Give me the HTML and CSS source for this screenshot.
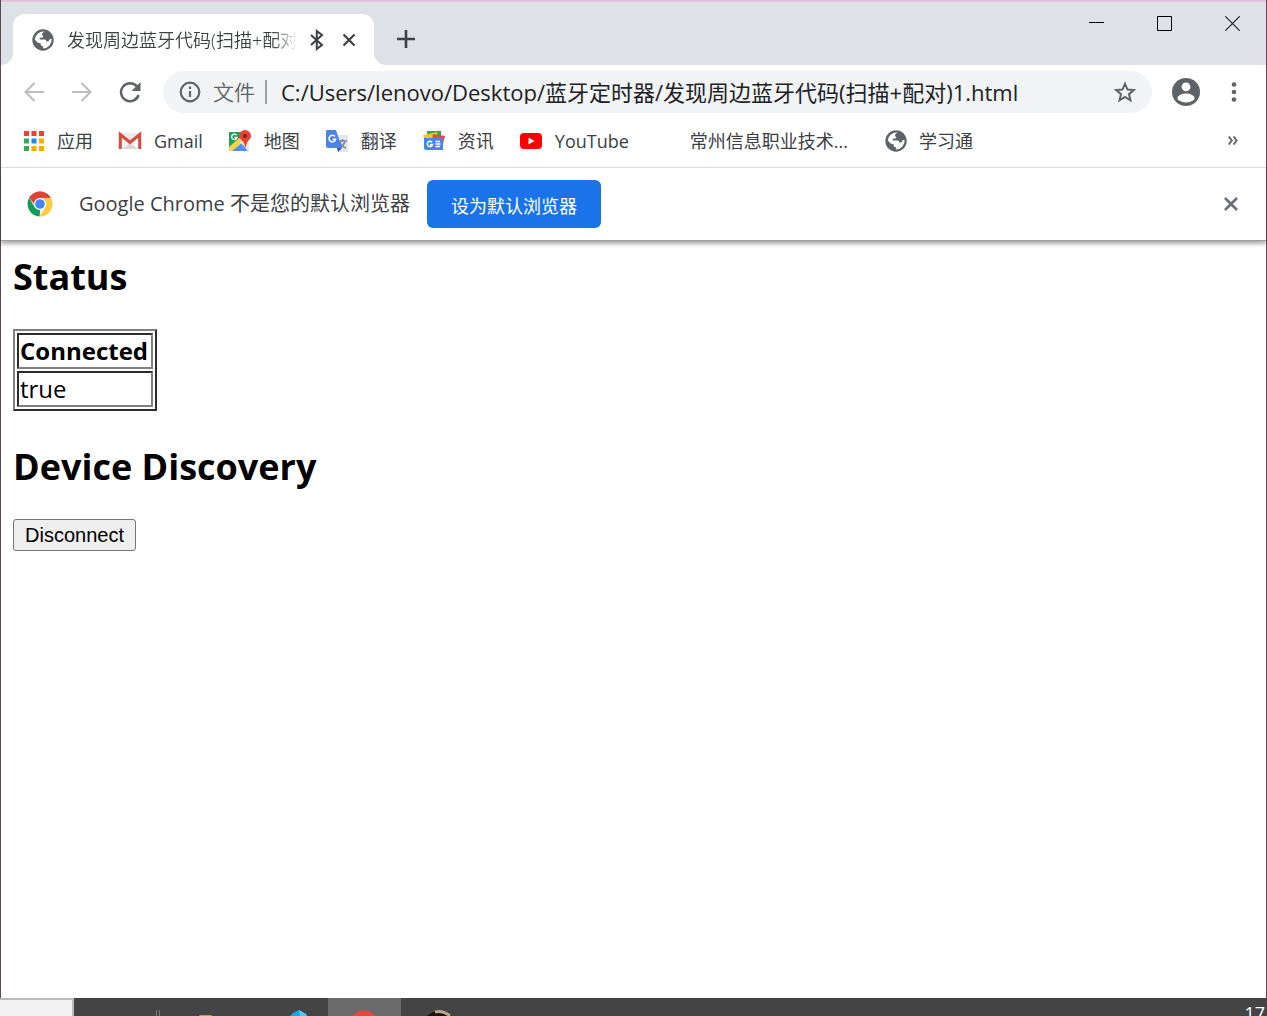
FILE: index.html
```html
<!DOCTYPE html>
<html lang="zh-CN">
<head>
<meta charset="utf-8">
<meta name="viewport" content="width=device-width, initial-scale=1">
<title>发现周边蓝牙代码(扫描+配对)</title>
<link rel="stylesheet" href="styles.css">
</head>
<body>
<svg class="defs" width="0" height="0" aria-hidden="true">
  <symbol id="globe" viewBox="0 0 22 22">
    <circle cx="11" cy="11" r="10.7" fill="#5f6368"/>
    <path fill="#fff" d="M12.6 2.6c-1 .6-2.600 1.600-2.600 2.800 0 1.200 1.200.8 1.200 2 0 1.300-1.600 1-3 1.300-1 .3-.7 1.500-.2 1.900h4.600c1 .1 1.700.9 1.700 1.900 1.500.2 2.600-.2 3-1.500.3-1 1-1 2.300-.9a8.700 8.700 0 0 1-8.300 9.400c-.3-1 .1-1.700-.6-2.300-.8-.6-2-.4-2-1.500v-1.500c-1.500.1-2.500-.2-3.300-1l-2.700-2.700A8.700 8.700 0 0 1 12.600 2.600z"/>
  </symbol>
</svg>

<div class="window">
  <header class="tabstrip">
    <div class="tab">
      <svg width="22" height="22"><use href="#globe"/></svg>
      <span class="tab-title">发现周边蓝牙代码(扫描+配对)</span>
      <svg width="16" height="22" viewBox="0 0 16 22" fill="none" stroke="#3c4043" stroke-width="2"><path d="M2 6l11 10-5.200 4V2L13 6 2 16"/></svg>
      <button class="icon-button tab-close" aria-label="关闭标签页"><svg width="14" height="14" viewBox="0 0 14 14" stroke="#3c4043" stroke-width="2.200"><path d="M1.500 1.500l11 11M12.500 1.500l-11 11"/></svg></button>
    </div>
    <button class="icon-button new-tab" aria-label="新标签页"><svg width="18" height="18" viewBox="0 0 18 18" stroke="#3c4043" stroke-width="2.600"><path d="M9 0v18M0 9h18"/></svg></button>
    <div class="window-controls">
      <button class="icon-button" aria-label="最小化"><svg width="15" height="15" viewBox="0 0 15 15" stroke="#000"><path d="M0 6.500h15"/></svg></button>
      <button class="icon-button" aria-label="最大化"><svg width="15" height="15" viewBox="0 0 15 15" stroke="#000" fill="none"><path d="M.5.5h14v14H.5z"/></svg></button>
      <button class="icon-button" aria-label="关闭"><svg width="15" height="15" viewBox="0 0 15 15" stroke="#222" stroke-width="1.200"><path d="M.3.3l14.400 14.400M14.700.3L.3 14.700"/></svg></button>
    </div>
  </header>

  <nav class="toolbar">
    <button class="icon-button nav-button" aria-label="后退"><svg width="20" height="20" viewBox="0 0 20 20" stroke="#babcbe" stroke-width="2" fill="none"><path d="M20 10H2M10.500 1L1.500 10l9 9"/></svg></button>
    <button class="icon-button nav-button" aria-label="前进"><svg width="20" height="20" viewBox="0 0 20 20" stroke="#babcbe" stroke-width="2" fill="none"><path d="M0 10h18M9.500 1l9 9-9 9"/></svg></button>
    <button class="icon-button nav-button" aria-label="重新加载"><svg width="22" height="22" viewBox="0 0 22 22"><path d="M18 5.500A9 9 0 1 0 19.600 14" fill="none" stroke="#5f6368" stroke-width="2.500"/><path d="M21.500 1v9h-9z" fill="#5f6368"/></svg></button>
    <div class="omnibox">
      <svg width="22" height="22" viewBox="0 0 22 22" fill="none" stroke="#5f6368" stroke-width="2.200"><circle cx="11" cy="11" r="9.300"/><path d="M11 10v6M11 5.500V8"/></svg>
      <label class="scheme" for="address">文件</label>
      <input class="address" id="address" type="text" value="C:/Users/lenovo/Desktop/蓝牙定时器/发现周边蓝牙代码(扫描+配对)1.html">
      <button class="icon-button" aria-label="收藏"><svg width="24" height="24" viewBox="0 0 24 24" fill="none" stroke="#5f6368" stroke-width="2"><path d="M12 3.800l2.500 5.800 6.300.500-4.800 4.100 1.500 6.100-5.500-3.300-5.500 3.300L8 14.200l-4.800-4.100 6.300-.5z"/></svg></button>
    </div>
    <button class="icon-button profile" aria-label="用户"><svg width="28" height="28" viewBox="0 0 28 28"><circle cx="14" cy="14" r="14" fill="#5f6368"/><circle cx="14" cy="8.800" r="4.400" fill="#fff"/><ellipse cx="14" cy="20" rx="8.600" ry="4.400" fill="#fff"/></svg></button>
    <button class="icon-button" aria-label="菜单"><svg width="6" height="20" viewBox="0 0 6 20" fill="#5f6368"><circle cx="3" cy="2.500" r="2.300"/><circle cx="3" cy="10" r="2.300"/><circle cx="3" cy="17.500" r="2.300"/></svg></button>
  </nav>

  <nav class="bookmarks">
    <a href="#"><svg width="22" height="22" viewBox="0 0 22 22"><path fill="#ea4335" d="M1 1h5v5H1zM8.500 1h5v5h-5zM16 1h5v5h-5z"/><path fill="#34a853" d="M1 8.500h5v5H1zM1 16h5v5H1z"/><path fill="#1e88e5" d="M8.500 8.500h5v5h-5z"/><path fill="#f9ab00" d="M16 8.500h5v5h-5zM8.500 16h5v5h-5zM16 16h5v5h-5z"/></svg>应用</a>
    <a href="#"><svg width="24" height="24" viewBox="0 0 24 24"><path fill="#eceaea" d="M1 4h22v16H1z"/><path fill="#fafafa" d="M4 7l8 7 8-7v13H4z"/><path fill="#d8d6d6" d="M4 20l8-6 8 6z"/><path d="M2.300 20V5.500l9.700 8 9.700-8V20" fill="none" stroke="#d54b40" stroke-width="3"/></svg>Gmail</a>
    <a href="#"><svg width="24" height="24" viewBox="0 0 24 24"><path fill="#20a15d" d="M1 3h17v19H1z"/><path fill="#4f8ff0" d="M4 22l8-9 8 9z"/><path fill="#ffd04b" d="M1 18L16 5l3 5L4 22H1z"/><path fill="#e5e6e8" d="M12 13l4-4 5 4v9h-1z"/><path fill="#20a15d" d="M1 3h14L1 17z"/><path d="M8.500 6.200a2.700 2.700 0 1 0 .5 2.300H6.500" fill="none" stroke="#fff" stroke-width="1.300"/><path fill="#e54335" d="M17 1a6 6 0 0 1 6 6c0 3.500-4.500 4.500-5 11h-1c-.5-6.500-6-7.500-6-11a6 6 0 0 1 6-6z"/><circle cx="17" cy="7" r="2.200" fill="#8e211b"/></svg>地图</a>
    <a href="#"><svg width="24" height="24" viewBox="0 0 24 24"><path fill="#e3e5e7" d="M9 6h14v17H13z"/><path d="M13 12h9M17.500 10v2M20 12c-1 4-3 6-6 7M15 13c1 3 3 5 6 6" fill="none" stroke="#79879a" stroke-width="1.600"/><path fill="#4b83e8" d="M2 1h9l6 18H3a2 2 0 0 1-2-2V2z"/><path fill="#3156a3" d="M12 19h5l-4 4z"/><path d="M10 7.500a3.300 3.300 0 1 0 .6 2.700H7.500" fill="none" stroke="#fff" stroke-width="1.600"/></svg>翻译</a>
    <a href="#"><svg width="24" height="24" viewBox="0 0 24 24"><path fill="#2fa74f" d="M5 2h14v9H5z"/><path fill="#fbc02d" d="M1 6l14-3 2 10H3z"/><path fill="#e5493a" d="M11 5l12 2-3 12H9z"/><path fill="#4b83ed" d="M2 9h19v12H4a2 2 0 0 1-2-2z"/><path d="M10 13.300a2.600 2.600 0 1 0 .5 2.200H8M13.500 12.500H18M13.500 15h5M13.500 17.500H18" fill="none" stroke="#fff" stroke-width="1.400"/></svg>资讯</a>
    <a href="#"><svg width="24" height="24" viewBox="0 0 24 24"><rect x="1" y="4" width="22" height="16" rx="4" fill="#f00"/><path fill="#fff" d="M9.500 8.500l6 3.500-6 3.500z"/></svg>YouTube</a>
    <a class="no-icon" href="#">常州信息职业技术...</a>
    <a class="wide-gap" href="#"><svg width="22" height="22"><use href="#globe"/></svg>学习通</a>
    <button class="icon-button more" aria-label="更多书签"><svg width="10" height="9" viewBox="0 0 10 9" fill="none" stroke="#5f6368" stroke-width="1.900"><path d="M.8.5l3 4-3 4M5.600.5l3 4-3 4"/></svg></button>
  </nav>

  <aside class="infobar">
    <svg width="26" height="26" viewBox="0 0 26 26"><circle cx="13" cy="13" r="12.500" fill="#fff"/><path fill="#db4437" d="M13 13L2.200 6.700A12.500 12.500 0 0 1 23.800 6.700H13z"/><path fill="#0f9d58" d="M2.200 6.700L7.600 16.200 13 19.300 12.700 25.500A12.500 12.500 0 0 1 2.200 6.700z"/><path fill="#ffcd40" d="M23.800 6.700A12.500 12.500 0 0 1 12.500 25.500L18.400 16.200 15 6.700z"/><path fill="#db4437" d="M13 6.700h10.800A12.500 12.500 0 0 0 2.200 6.700L7 13z"/><circle cx="13" cy="13" r="6.100" fill="#fff"/><circle cx="13" cy="13" r="4.800" fill="#4285f4"/></svg>
    <span class="message">Google Chrome 不是您的默认浏览器</span>
    <button class="primary">设为默认浏览器</button>
    <button class="icon-button dismiss" aria-label="关闭提示"><svg width="14" height="14" viewBox="0 0 14 14" stroke="#6b6e72" stroke-width="2.600"><path d="M1 1l12 12M13 1L1 13"/></svg></button>
  </aside>

  <main class="page">
    <h2>Status</h2>
    <table>
      <thead><tr><th scope="col">Connected</th></tr></thead>
      <tbody><tr><td>true</td></tr></tbody>
    </table>
    <h2>Device Discovery</h2>
    <button class="disconnect">Disconnect</button>
  </main>
</div>

<footer class="taskbar">
  <div class="start"></div>
  <svg class="apps" width="400" height="18" viewBox="0 0 400 18"><path d="M82.500 12v6M85.500 12v6" stroke="#777"/><path fill="#c9a227" d="M125 18q0-1 2-1h10q1 0 1 1z"/><path fill="#1ba1e8" d="M216 18l3-3 6-3 7 4 1 2z"/><path fill="#55c3f5" d="M225 12l7 4 1 2h-7z"/><path fill="#6b6b6b" d="M254 0h73v18h-73z"/><path fill="#e8453c" d="M278 18q12-11 24 0z"/><path fill="#17120e" d="M353 18q12-10 25 0z"/><path d="M361 14q8-2 15 4" fill="none" stroke="#b7a78c" stroke-width="3"/></svg>
  <time class="clock">17</time>
</footer>
</body>
</html>
```
FILE: styles.css
```css
* {
  box-sizing: border-box;
}

body {
  display: flex;
  flex-direction: column;
  min-height: 100vh;
  margin: 0;
  background: #fff;
  color: #3c4043;
  font-family: "Open Sans", "Noto Sans CJK SC", sans-serif;
  font-size: 18px;
  line-height: 24px;
}

svg {
  display: block;
  flex: none;
}

.defs {
  position: absolute;
}

.icon-button {
  display: flex;
  flex: none;
  align-items: center;
  justify-content: center;
  padding: 0;
  border: 0;
  background: none;
}

.window {
  display: flex;
  flex: 1;
  flex-direction: column;
  border: solid #5b4a55;
  border-width: 0 1px;
}

/* Tabs */
.tabstrip {
  display: flex;
  align-items: flex-end;
  height: 65px;
  padding-left: 12px;
  border-top: 2px solid #e2c0dc;
  background: #dee1e6;
}

.tab {
  position: relative;
  display: flex;
  align-items: center;
  width: 361px;
  height: 51px;
  padding: 0 18px 0 19px;
  border-radius: 12px 12px 0 0;
  background: #fff;
}

.tab::before,
.tab::after {
  position: absolute;
  bottom: 0;
  width: 12px;
  height: 12px;
  content: "";
}

.tab::before {
  right: 100%;
  background: radial-gradient(circle at 0 0, transparent 12px, #fff 12px);
}

.tab::after {
  left: 100%;
  background: radial-gradient(circle at 100% 0, transparent 12px, #fff 12px);
}

.tab-title {
  flex: 1;
  margin: 0 12px 0 13px;
  overflow: hidden;
  white-space: nowrap;
  font-weight: 350;
  mask-image: linear-gradient(to left, transparent, #000 24px);
}

.tab-close {
  margin-left: 17px;
}

.new-tab {
  align-self: center;
  margin: 10px 0 0 23px;
}

.window-controls {
  display: flex;
  align-self: flex-start;
  margin-left: auto;
}

.window-controls .icon-button {
  width: 68px;
  height: 42px;
}

/* Address row */
.toolbar {
  display: flex;
  align-items: center;
  gap: 20px;
  height: 54px;
  padding: 0 29px 0 22px;
}

.nav-button {
  width: 22px;
  margin-right: 6px;
}

.omnibox {
  display: flex;
  flex: 1;
  align-items: center;
  height: 42px;
  margin-left: -4px;
  padding: 0 15px 0 16px;
  border-radius: 21px;
  background: #f1f3f4;
  font-size: 22px;
}

.profile {
  margin-right: 11px;
}

.scheme {
  flex: none;
  margin-left: 12px;
  padding-right: 10px;
  border-right: 2px solid #9aa0a6;
  color: #5f6368;
  font-size: 21px;
  font-weight: 350;
}

.address {
  flex: 1;
  min-width: 0;
  padding: 0 14px;
  border: 0;
  background: none;
  color: #202124;
  font: inherit;
}

/* Bookmarks */
.bookmarks {
  display: flex;
  align-items: center;
  gap: 25px;
  height: 49px;
  padding: 0 28px 5px 22px;
  border-bottom: 1px solid #dadce0;
}

.bookmarks a {
  display: flex;
  flex: none;
  align-items: center;
  gap: 12px;
  color: #3c4043;
  text-decoration: none;
}

.bookmarks .no-icon {
  margin-left: 36px;
}

.bookmarks .wide-gap {
  margin-left: 12px;
}

.more {
  margin-left: auto;
}

/* Default-browser notice */
.infobar {
  z-index: 1;
  display: flex;
  align-items: center;
  height: 73px;
  padding: 0 28px 0 26px;
  border-bottom: 1px solid #a0a0a0;
  background: #fff;
  box-shadow: 0 3px 4px #0005;
  font-size: 20px;
}

.message {
  margin: 0 17px 0 26px;
}

.primary {
  height: 48px;
  padding: 2px 24px 0;
  border: 0;
  border-radius: 6px;
  background: #1a73e8;
  color: #fff;
  font-family: inherit;
  font-size: 18px;
}

.dismiss {
  margin-left: auto;
}

/* Document */
.page {
  flex: 1;
  padding: 12px;
  color: #000;
  font-size: 24px;
}

h2 {
  margin: 0 0 28px;
  font-size: 36px;
  line-height: 48px;
}

table {
  margin-bottom: 32px;
  border: 2px outset #808080;
  border-spacing: 2px;
}

th,
td {
  padding: 1px 3px 1px 1px;
  border: 2px inset #808080;
  line-height: 30px;
  text-align: left;
}

.disconnect {
  height: 32px;
  padding: 0 11px;
  border: 1px solid #767676;
  border-radius: 3px;
  background: #efefef;
  color: #000;
  font-family: "Liberation Sans", sans-serif;
  font-size: 20px;
}

/* Taskbar */
.taskbar {
  display: flex;
  height: 18px;
  overflow: hidden;
  background: #444;
}

.start {
  width: 74px;
  border: solid #bbb;
  border-width: 2px 2px 0 0;
  background: #f2f2f2;
}

.clock {
  margin: 3px 2px 0 auto;
  color: #fff;
}
```
